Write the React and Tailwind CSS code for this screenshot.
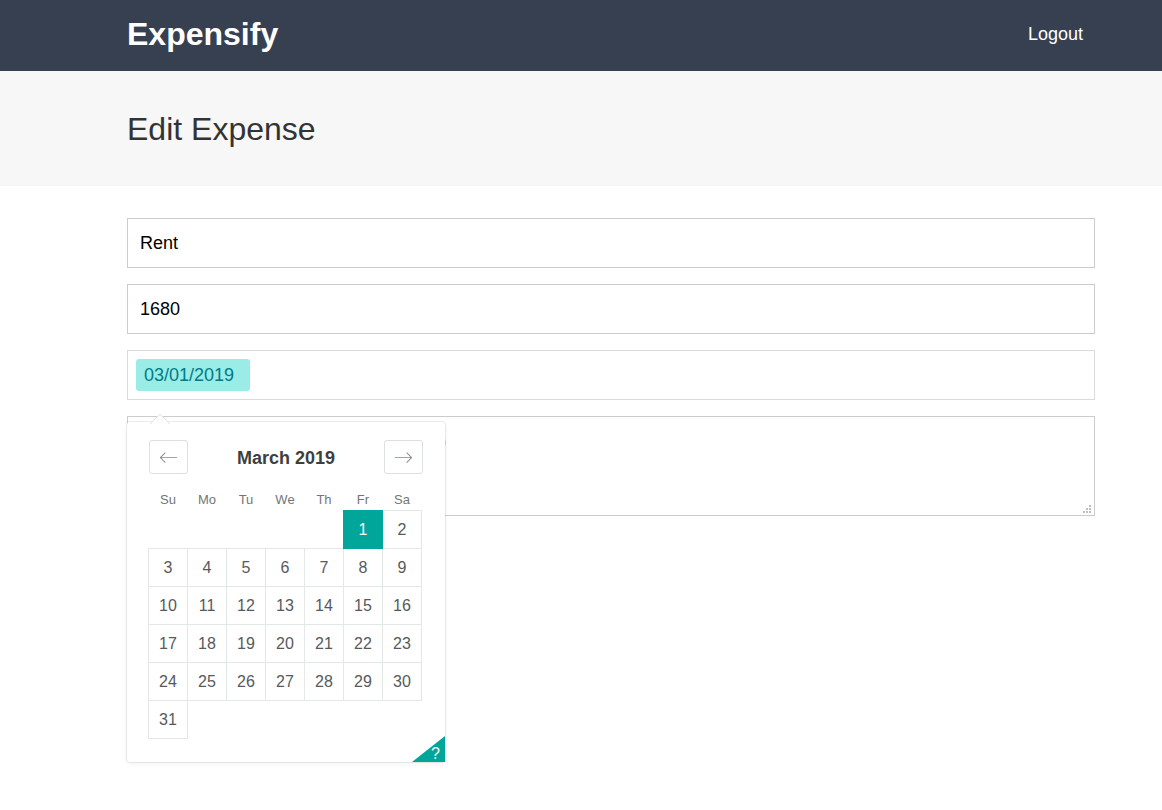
import React from "react";

const weekdays = ["Su", "Mo", "Tu", "We", "Th", "Fr", "Sa"];

// March 2019 starts on a Friday
const weeks = [
  [null, null, null, null, null, 1, 2],
  [3, 4, 5, 6, 7, 8, 9],
  [10, 11, 12, 13, 14, 15, 16],
  [17, 18, 19, 20, 21, 22, 23],
  [24, 25, 26, 27, 28, 29, 30],
  [31, null, null, null, null, null, null],
];

function Header() {
  return (
    <header className="bg-[#364051] pr-[67px] pl-[127px]">
      <div className="flex h-[71px] items-center justify-between pb-1">
        <a href="#dashboard">
          <h1 className="text-[32px] leading-9 font-bold text-white">Expensify</h1>
        </a>
        <button type="button" className="px-3 text-lg text-white">
          Logout
        </button>
      </div>
    </header>
  );
}

function ArrowIcon({ flip }) {
  return (
    <svg
      viewBox="0 0 1000 1000"
      className="h-[19px] w-[19px] fill-[#82888a]"
      aria-hidden="true"
    >
      {flip ? (
        <path d="M694.4 242.4l249.1 249.1c11 11 11 21 0 32L694.4 772.7c-5 5-10 7-16 7s-11-2-16-7c-11-11-11-21 0-32l210.1-210.1H67.1c-13 0-23-10-23-23s10-23 23-23h805.4L662.4 274.5c-21-21.1 11-53.1 32-32.1z" />
      ) : (
        <path d="M336.2 274.5l-210.1 210h805.4c13 0 23 10 23 23s-10 23-23 23H126.1l210.1 210.1c11 11 11 21 0 32-5 5-10 7-16 7s-11-2-16-7l-249.1-249c-11-11-11-21 0-32l249.1-249.1c21-21.1 53 10.9 32 32z" />
      )}
    </svg>
  );
}

function NavButton({ label, flip }) {
  return (
    <button
      type="button"
      aria-label={label}
      className="flex h-[34px] w-[39px] items-center justify-center rounded-[3px] border border-[#dce0e0] bg-white"
    >
      <ArrowIcon flip={flip} />
    </button>
  );
}

function Day({ day }) {
  if (day === null) return <td className="h-[38px] p-0" />;
  const tone =
    day === 1
      ? "border-[#00a699] bg-[#00a699] text-white [border-style:double]"
      : "border-[#e4e7e7] bg-white text-[#565a5c] border-solid";
  return (
    <td className={`h-[38px] border p-0 ${tone}`}>
      <button type="button" className="h-[37px] w-full text-base">
        {day}
      </button>
    </td>
  );
}

function Calendar() {
  return (
    <div className="absolute top-[71px] -left-px z-10 h-[340px] w-[318px] rounded-[3px] bg-white shadow-[0_2px_6px_rgba(0,0,0,0.05),0_0_0_1px_rgba(0,0,0,0.07)]">
      <svg
        viewBox="0 0 20 10"
        className="absolute -top-2 left-[23px] h-2.5 w-5"
        aria-hidden="true"
      >
        <path d="M0 10L10 0L20 10Z" fill="#fff" />
        <path d="M0 10L10 0L20 10" fill="none" stroke="#dbdbdb" strokeWidth="0.8" />
      </svg>
      <div className="flex h-full flex-col pt-[18px] pr-[22px] pl-[22px]">
        <div className="flex items-center justify-between">
          <NavButton label="Previous month" />
          <strong className="pt-0.5 text-lg text-[#3c3f40]">March 2019</strong>
          <NavButton label="Next month" flip />
        </div>
        <table className="mt-4 -ml-px w-[274px] table-fixed border-collapse text-center">
          <thead>
            <tr>
              {weekdays.map((name) => (
                <th
                  key={name}
                  className="h-5 p-0 text-center text-[13px] leading-5 font-normal text-[#757575]"
                >
                  {name}
                </th>
              ))}
            </tr>
          </thead>
          <tbody>
            {weeks.map((week, w) => (
              <tr key={w}>
                {week.map((day, d) => (
                  <Day key={d} day={day} />
                ))}
              </tr>
            ))}
          </tbody>
        </table>
      </div>
      <button
        type="button"
        aria-label="Keyboard shortcuts"
        className="absolute right-0 bottom-0 h-[26px] w-[33px] text-base text-white"
      >
        <svg viewBox="0 0 33 26" className="absolute inset-0" aria-hidden="true">
          <path d="M33 0V26H0Z" fill="#00a699" />
        </svg>
        <span className="absolute right-[5px] bottom-0 leading-4">?</span>
      </button>
    </div>
  );
}

export default function App() {
  return (
    <div className="min-h-screen bg-white font-['Liberation_Sans',Arial,sans-serif] text-[#333333]">
      <Header />
      <div className="bg-[#f7f7f7] pr-[67px] pl-[127px]">
        <h2 className="pt-10 pb-[39px] text-[32px] leading-9">Edit Expense</h2>
      </div>
      <form className="flex flex-col gap-4 pt-8 pr-[67px] pl-[127px]">
        <input
          type="text"
          aria-label="Description"
          defaultValue="Rent"
          className="h-[50px] w-full border border-[#cacccd] px-3 text-lg text-black outline-none"
        />
        <input
          type="text"
          aria-label="Amount"
          defaultValue="1680"
          className="h-[50px] w-full border border-[#cacccd] px-3 text-lg text-black outline-none"
        />
        <div className="relative flex h-[50px] items-center border border-[#dbdbdb] bg-white px-2">
          <input
            type="text"
            aria-label="Date"
            defaultValue="03/01/2019"
            className="h-8 w-[114px] rounded-[3px] bg-[#99ede6] px-2 text-lg text-[#007a87] outline-none"
          />
          <Calendar />
        </div>
        <div className="relative">
          <textarea
            aria-label="Note"
            placeholder="Add a note for your expense (optional)"
            className="block h-[100px] w-full resize-none border border-[#cacccd] p-3 text-lg leading-6 text-black outline-none placeholder:text-[#757575]"
          />
          <svg
            viewBox="0 0 8 8"
            className="absolute right-1 bottom-[3px] h-2 w-2 fill-[#bfbfbf]"
            shapeRendering="crispEdges"
            aria-hidden="true"
          >
            <path d="M6 0h2v2h-2zM3 3h2v2h-2zM6 3h2v2h-2zM0 6h2v2h-2zM3 6h2v2h-2zM6 6h2v2h-2z" />
          </svg>
        </div>
      </form>
    </div>
  );
}
